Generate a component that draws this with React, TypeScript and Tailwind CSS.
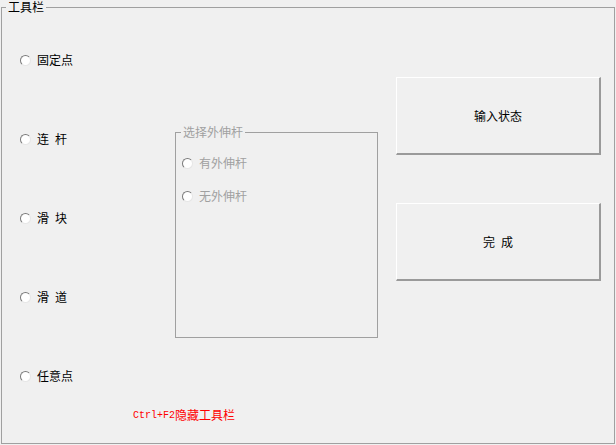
import React from "react";

const font = "font-['SimSun','Noto_Sans_CJK_SC',sans-serif]";

// 经典 Windows 单选框
function Radio({ label, disabled }: { label: string; disabled?: boolean }) {
  return (
    <div className="flex items-center h-4">
      <span className="w-[11px] h-[11px] rounded-full bg-white border border-t-[#7a7a7a] border-l-[#7a7a7a] border-r-[#e6e6e6] border-b-[#e6e6e6] shrink-0" />
      <span className={`ml-[6px] text-[12px] leading-4 whitespace-pre ${disabled ? "text-[#a0a0a0]" : "text-black"}`}>{label}</span>
    </div>
  );
}

function Btn({ label }: { label: string }) {
  return (
    <button className="w-[205px] h-[78px] bg-[#f0f0f0] border-t border-l border-white border-r-2 border-b-2 border-r-[#9a9a9a] border-b-[#9a9a9a] text-[12px] text-black whitespace-pre">
      {label}
    </button>
  );
}

export default function App() {
  return (
    <div className={`w-[616px] h-[445px] pt-[1px] bg-[#f0f0f0] overflow-hidden ${font}`}>
      <fieldset className="ml-[1px] w-[614px] h-[443px] border border-[#a0a0a0]">
        <legend className="ml-[4px] px-[2px] text-[12px] leading-[12px] text-black">工具栏</legend>

        <div className="flex">
          {/* 左侧：构件类型 */}
          <div className="w-[173px] pl-[18px] pt-[39px] flex flex-col gap-[63px]">
            <Radio label="固定点" />
            <Radio label={"连\u2002杆"} />
            <Radio label={"滑\u2002块"} />
            <Radio label={"滑\u2002道"} />
            <Radio label="任意点" />
          </div>

          {/* 中间：外伸杆选择 */}
          <fieldset className="mt-[112px] w-[203px] h-[213px] border border-[#a0a0a0]">
            <legend className="ml-[5px] px-[2px] text-[12px] leading-[14px] text-[#a0a0a0]">选择外伸杆</legend>
            <div className="pl-[6px] pt-[16px] flex flex-col gap-[17px]">
              <Radio label="有外伸杆" disabled />
              <Radio label="无外伸杆" disabled />
            </div>
          </fieldset>

          {/* 右侧：按钮 */}
          <div className="ml-[18px] mt-[64px] flex flex-col gap-[48px]">
            <Btn label="输入状态" />
            <Btn label={"完\u2002成"} />
          </div>
        </div>

        <div className="mt-[23px] pl-[131px] flex items-center h-4 text-[#ff0000]">
          <span className="font-['Liberation_Mono',monospace] text-[10px]">Ctrl+F2</span>
          <span className="text-[12px]">隐藏工具栏</span>
        </div>
      </fieldset>
    </div>
  );
}
